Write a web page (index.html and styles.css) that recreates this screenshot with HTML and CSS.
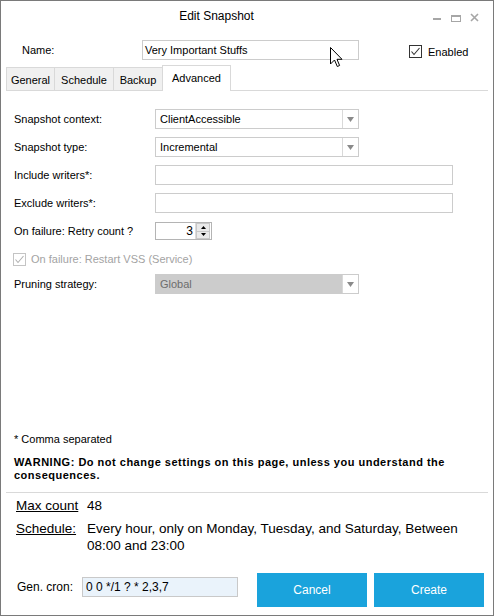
FILE: index.html
```html
<!DOCTYPE html>
<html>
<head>
<meta charset="utf-8">
<title>Edit Snapshot</title>
<link rel="stylesheet" href="styles.css">
</head>
<body>
<div class="window">
  <div class="titlebar">
    <div class="title">Edit Snapshot</div>
    <svg class="controls" width="61" height="32" viewBox="0 0 61 32">
      <rect x="1" y="17" width="8" height="2" fill="#a6a6a6"/>
      <rect x="19.5" y="14.5" width="9" height="6" fill="none" stroke="#a6a6a6" stroke-width="1"/>
      <rect x="19" y="14" width="10" height="2" fill="#a6a6a6"/>
      <path d="M39 13 L46 20 M46 13 L39 20" stroke="#a6a6a6" stroke-width="1.6"/>
    </svg>
  </div>

  <div class="namerow">
    <div class="name-label">Name:</div>
    <div class="name-input">Very Important Stuffs</div>
    <div class="enabled">
      <svg class="chk" width="13" height="13" viewBox="0 0 13 13">
        <rect x="0.5" y="0.5" width="12" height="12" fill="#fff" stroke="#333"/>
        <path d="M2.5 6.5 L5 9.5 L10.5 3" fill="none" stroke="#333" stroke-width="1.1"/>
      </svg>
      <span>Enabled</span>
    </div>
  </div>

  <div class="tabs">
    <div class="tab tab-general">General</div>
    <div class="tab tab-schedule">Schedule</div>
    <div class="tab tab-backup">Backup</div>
    <div class="tab tab-advanced active">Advanced</div>
  </div>

  <div class="panel">
    <div class="row first">
      <div class="lbl">Snapshot context:</div>
      <div class="select">
        <div class="val">ClientAccessible</div>
        <div class="arrow"><svg width="7" height="5" viewBox="0 0 7 5"><path d="M0 0 H7 L3.5 5 Z" fill="#8a8a8a"/></svg></div>
      </div>
    </div>
    <div class="row">
      <div class="lbl">Snapshot type:</div>
      <div class="select">
        <div class="val">Incremental</div>
        <div class="arrow"><svg width="7" height="5" viewBox="0 0 7 5"><path d="M0 0 H7 L3.5 5 Z" fill="#8a8a8a"/></svg></div>
      </div>
    </div>
    <div class="row">
      <div class="lbl">Include writers*:</div>
      <div class="textinput"></div>
    </div>
    <div class="row">
      <div class="lbl">Exclude writers*:</div>
      <div class="textinput"></div>
    </div>
    <div class="row">
      <div class="lbl">On failure: Retry count ?</div>
      <div class="spinner">
        <div class="spin-val">3</div>
        <div class="spin-btns">
          <div class="spin-btn"><svg width="5" height="3" viewBox="0 0 5 3"><path d="M0 3 H5 L2.5 0 Z" fill="#000"/></svg></div>
          <div class="spin-btn"><svg width="5" height="3" viewBox="0 0 5 3"><path d="M0 0 H5 L2.5 3 Z" fill="#000"/></svg></div>
        </div>
      </div>
    </div>
    <div class="row checkrow">
      <svg class="chk-dis" width="13" height="13" viewBox="0 0 13 13">
        <rect x="0.5" y="0.5" width="12" height="12" fill="#fff" stroke="#c4c4c4"/>
        <path d="M2.5 6.5 L5 9.5 L10.5 3" fill="none" stroke="#b0b0b0" stroke-width="1.1"/>
      </svg>
      <span class="dis-label">On failure: Restart VSS (Service)</span>
    </div>
    <div class="row pruning">
      <div class="lbl">Pruning strategy:</div>
      <div class="select disabled">
        <div class="val">Global</div>
        <div class="arrow"><svg width="7" height="5" viewBox="0 0 7 5"><path d="M0 0 H7 L3.5 5 Z" fill="#8a8a8a"/></svg></div>
      </div>
    </div>
    <div class="spacer"></div>
    <div class="note">* Comma separated</div>
    <div class="warning">WARNING: Do not change settings on this page, unless you understand the consequences.</div>
  </div>

  <div class="footer">
    <div class="frow">
      <div class="flabel">Max count</div>
      <div class="fval">48</div>
    </div>
    <div class="frow schedule">
      <div class="flabel">Schedule:</div>
      <div class="fval">Every hour, only on Monday, Tuesday, and Saturday, Between 08:00 and 23:00</div>
    </div>
    <div class="cronrow">
      <div class="cronlabel">Gen. cron:</div>
      <div class="croninput">0 0 */1 ? * 2,3,7</div>
      <div class="btn btn-cancel">Cancel</div>
      <div class="btn btn-create">Create</div>
    </div>
  </div>

  <svg class="cursor" width="13" height="21" viewBox="0 0 13 21">
    <path d="M0.5 0.5 L0.5 17 L4.5 13 L7.3 19.5 L9.6 18.5 L7 12.3 L12 12.3 Z" fill="#fff" stroke="#000" stroke-width="1" stroke-linejoin="miter"/>
  </svg>
</div>
</body>
</html>
```

FILE: styles.css
```css
html, body {
  margin: 0;
  padding: 0;
  background: #fff;
}
body {
  font-family: "Liberation Sans", Arial, sans-serif;
  font-size: 11px;
  color: #000;
}
.window {
  position: relative;
  width: 494px;
  height: 616px;
  box-sizing: border-box;
  border: 1px solid #7a7a7a;
  background: #fff;
  display: flex;
  flex-direction: column;
  overflow: hidden;
}

/* title bar */
.titlebar {
  height: 32px;
  display: flex;
  flex-shrink: 0;
}
.title {
  flex: 1;
  text-align: center;
  font-size: 12px;
  line-height: 30px;
  color: #000;
}
.controls {
  flex-shrink: 0;
  display: block;
}

/* name row */
.namerow {
  display: flex;
  align-items: center;
  height: 20px;
  margin-top: 7px;
  padding-left: 21px;
  flex-shrink: 0;
}
.name-label {
  width: 120px;
}
.name-input {
  width: 217px;
  height: 20px;
  box-sizing: border-box;
  border: 1px solid #cccccc;
  padding-left: 2px;
  line-height: 18px;
}
.enabled {
  margin-left: 50px;
  margin-top: 3px;
  display: flex;
  align-items: center;
  gap: 6px;
  font-size: 11px;
}
.chk, .chk-dis {
  display: block;
  flex-shrink: 0;
}

/* tabs */
.tabs {
  display: flex;
  align-items: flex-end;
  height: 25px;
  margin: 5px 5px 0 5px;
  border-bottom: 1px solid #d9d9d9;
  flex-shrink: 0;
}
.tab {
  box-sizing: border-box;
  height: 23px;
  border: 1px solid #d9d9d9;
  border-bottom: none;
  background: #f0f0f0;
  text-align: center;
  padding-top: 6px;
  line-height: 13px;
  margin-left: -1px;
  font-size: 11px;
}
.tab-general { margin-left: 0; width: 49px; }
.tab-schedule { width: 60px; }
.tab-backup { width: 50px; }
.tab-advanced { width: 69px; }
.tab.active {
  height: 26px;
  background: #fff;
  margin-bottom: -1px;
  padding-top: 6px;
}

/* panel */
.panel {
  height: 402px;
  box-sizing: border-box;
  margin: 0 5px;
  border-bottom: 1px solid #d9d9d9;
  padding: 18px 0 10px 8px;
  display: flex;
  flex-direction: column;
  flex-shrink: 0;
}
.row {
  display: flex;
  align-items: center;
  height: 20px;
  margin-top: 8px;
  flex-shrink: 0;
}
.row.first { margin-top: 0; }
.row.pruning { margin-top: 5px; }
.lbl {
  width: 141px;
  flex-shrink: 0;
}
.select {
  width: 204px;
  height: 20px;
  box-sizing: border-box;
  border: 1px solid #cccccc;
  display: flex;
  background: #fff;
}
.select .val {
  flex: 1;
  padding-left: 4px;
  line-height: 18px;
}
.select .arrow {
  width: 16px;
  box-sizing: border-box;
  border-left: 1px solid #d9d9d9;
  display: flex;
  align-items: center;
  justify-content: center;
  background: #fff;
}
.select.disabled {
  background: #cccccc;
}
.select.disabled .val {
  color: #6d6d6d;
}
.textinput {
  width: 298px;
  height: 20px;
  box-sizing: border-box;
  border: 1px solid #cccccc;
}
.spinner {
  width: 57px;
  height: 18px;
  box-sizing: border-box;
  border: 1px solid #b4b4b4;
  display: flex;
}
.spin-val {
  flex: 1;
  text-align: right;
  padding-right: 2px;
  font-size: 12px;
  line-height: 16px;
}
.spin-btns {
  width: 15px;
  display: flex;
  flex-direction: column;
  border-left: 1px solid #dcdcdc;
}
.spin-btn {
  flex: 1;
  display: flex;
  align-items: center;
  justify-content: center;
  background: #eaeaea;
  border: 1px solid #c8c8c8;
  margin: 0 1px 0 0;
}
.spin-btn + .spin-btn {
  border-top: none;
}
.checkrow {
  margin-left: -1px;
}
.dis-label {
  margin-left: 5px;
  color: #a3a3a3;
  font-size: 11px;
}
.spacer {
  flex: 1;
}
.note {
  line-height: 13px;
}
.warning {
  margin-top: 10px;
  line-height: 13px;
  font-weight: bold;
  letter-spacing: 0.5px;
}

/* footer */
.footer {
  padding: 4px 0 0 15px;
  font-size: 13.5px;
  flex-shrink: 0;
}
.frow {
  display: flex;
  line-height: 17px;
}
.frow.schedule {
  margin-top: 6px;
}
.flabel {
  width: 71px;
  flex-shrink: 0;
  text-decoration: underline;
}
.fval {
  flex: 1;
  padding-right: 20px;
}
.cronrow {
  display: flex;
  margin-top: 19px;
  padding-left: 1px;
}
.cronlabel {
  width: 65px;
  height: 20px;
  margin-top: 4px;
  line-height: 20px;
  font-size: 12px;
}
.croninput {
  width: 156px;
  height: 20px;
  margin-top: 4px;
  box-sizing: border-box;
  border: 1px solid #c9c9c9;
  background: #eaf3fb;
  font-size: 12px;
  padding-left: 3px;
  line-height: 18px;
}
.btn {
  width: 110px;
  height: 34px;
  background: #1aa3dc;
  color: #fff;
  font-size: 12px;
  display: flex;
  align-items: center;
  justify-content: center;
}
.btn-cancel {
  margin-left: 19px;
}
.btn-create {
  margin-left: 7px;
}

/* mouse pointer overlay */
.cursor {
  position: absolute;
  left: 329px;
  top: 46px;
}
```
